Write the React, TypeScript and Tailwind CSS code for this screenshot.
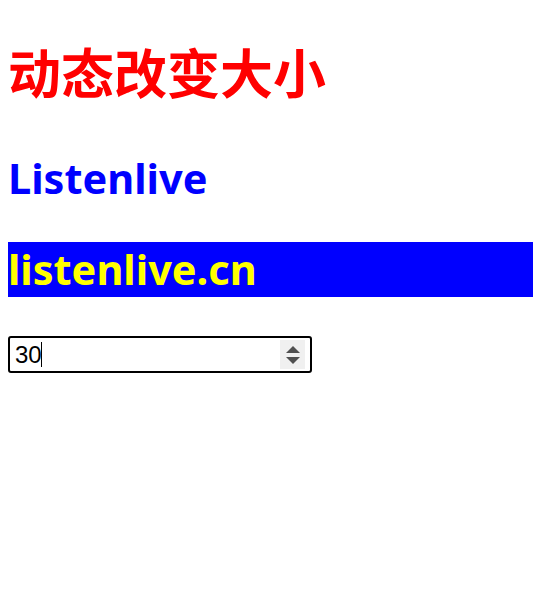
import React, { useState } from "react";

export default function App() {
  const [size, setSize] = useState(30);

  return (
    <div className="w-[533px] min-h-[590px] bg-white pl-2 pt-[39px] font-['Noto_Sans',sans-serif]">
      <h1 className="text-[53px] leading-[64px] font-bold text-[#ff0000] font-['Noto_Sans_CJK_SC',sans-serif]">
        动态改变大小
      </h1>
      <h2 className="mt-[49px] text-[41.5px] leading-[52px] font-bold text-[#0000ff]">
        Listenlive
      </h2>
      <div className="mt-[38px] h-[55px] bg-[#0000ff] flex items-center text-[41.5px] font-bold text-[#ffff00]">
        listenlive.cn
      </div>
      <div className="mt-[39px] relative w-[304px]">
        <input
          type="number"
          value={size}
          onChange={(e) => setSize(Number(e.target.value))}
          className="w-[304px] h-[37px] border-2 border-black rounded-[3px] pl-[5px] pr-[30px] text-[24px] text-black caret-transparent font-['Liberation_Sans',sans-serif] outline-none [appearance:textfield] [&::-webkit-inner-spin-button]:appearance-none [&::-webkit-outer-spin-button]:appearance-none"
        />
        {/* fake caret, the page isn't focused when photographed */}
        <div className="absolute left-[33px] top-[6px] w-px h-[25px] bg-black pointer-events-none" />
        <div className="absolute right-[7px] top-[4px] w-[25px] h-[29px] bg-[#f0f0f0] flex flex-col items-center justify-center gap-[4px]">
          <button onClick={() => setSize(size + 1)}>
            <div className="w-0 h-0 border-l-[7px] border-r-[7px] border-b-[7px] border-l-transparent border-r-transparent border-b-[#505050]" />
          </button>
          <button onClick={() => setSize(size - 1)}>
            <div className="w-0 h-0 border-l-[7px] border-r-[7px] border-t-[7px] border-l-transparent border-r-transparent border-t-[#505050]" />
          </button>
        </div>
      </div>
    </div>
  );
}
